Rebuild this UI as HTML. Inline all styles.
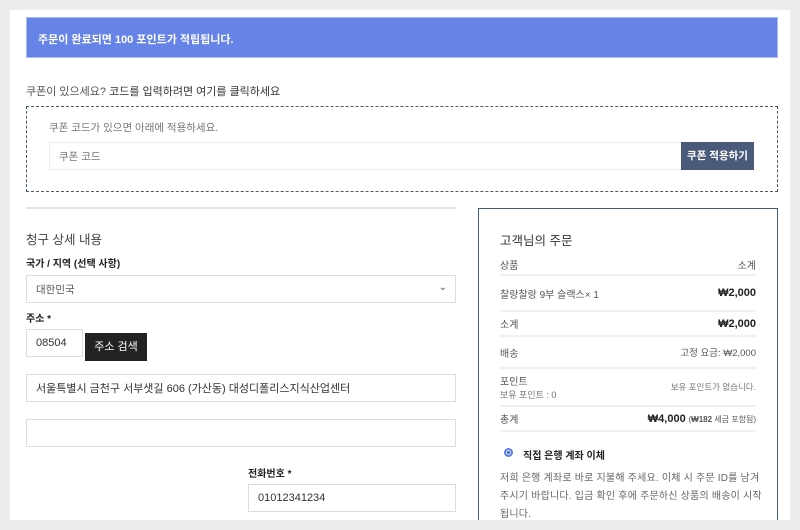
<!DOCTYPE html>
<html><head><meta charset="utf-8"><style>
*{box-sizing:border-box;margin:0;padding:0}
html{width:800px;height:530px;overflow:hidden}
body{width:800px;height:530px;background:#ededed;font-family:"Liberation Sans","Noto Sans CJK KR",sans-serif;position:relative;overflow:hidden;color:#333}
.p{position:absolute;left:10px;top:10px;width:780px;height:510px;background:#fff}
.a{position:absolute}
.in{position:absolute;border:1px solid #ddd;background:#fff;font-size:12px;color:#333;padding-left:9px;display:flex;align-items:center}
.row{position:absolute;left:500px;width:256px;font-size:10px;display:flex;justify-content:space-between;align-items:center;border-bottom:2px solid #f0f0f0}
</style></head><body>
<div class="p"></div>
<div class="a" style="left:26px;top:17px;width:752px;height:41px;background:#6683e8;border:1px solid #a9b9f2;color:#fff;font-size:11px;font-weight:bold;padding:13px 0 0 11px">주문이 완료되면 100 포인트가 적립됩니다.</div>
<div class="a" style="left:26px;top:83px;font-size:11px;color:#555">쿠폰이 있으세요? <span style="color:#333">코드를 입력하려면 여기를 클릭하세요</span></div>
<div class="a" style="left:26px;top:106px;width:752px;height:86px;border:1px dashed #4a5a7a"></div>
<div class="a" style="left:49px;top:120px;font-size:10.5px;color:#777">쿠폰 코드가 있으면 아래에 적용하세요.</div>
<div class="in" style="left:49px;top:142px;width:633px;height:28px;color:#777;font-size:10.5px;border-color:#eee">쿠폰 코드</div>
<div class="a" style="left:681px;top:142px;width:73px;height:28px;background:#4a5a7a;color:#fff;font-size:10.5px;font-weight:bold;text-align:center;line-height:28px">쿠폰 적용하기</div>
<div class="a" style="left:26px;top:207px;width:430px;height:2px;background:#e4e4e4"></div>
<div class="a" style="left:26px;top:229px;font-size:12.5px;color:#444">청구 상세 내용</div>
<div class="a" style="left:26px;top:255px;font-size:10px;font-weight:bold;color:#222">국가 / 지역 (선택 사항)</div>
<div class="in" style="left:26px;top:275px;width:430px;height:28px;color:#555;font-size:10.5px">대한민국<span style="position:absolute;right:8px;top:6px;font-size:10px">⌄</span></div>
<div class="a" style="left:26px;top:310px;font-size:10px;font-weight:bold;color:#222">주소 *</div>
<div class="in" style="left:26px;top:329px;width:57px;height:28px;font-size:11px">08504</div>
<div class="a" style="left:85px;top:333px;width:62px;height:28px;background:#222;color:#fff;font-size:11px;text-align:center;line-height:28px">주소 검색</div>
<div class="in" style="left:26px;top:374px;width:430px;height:28px;font-size:11px">서울특별시 금천구 서부샛길 606 (가산동) 대성디폴리스지식산업센터</div>
<div class="in" style="left:26px;top:419px;width:430px;height:28px"></div>
<div class="a" style="left:248px;top:465px;font-size:10px;font-weight:bold;color:#222">전화번호 *</div>
<div class="in" style="left:248px;top:484px;width:208px;height:28px;font-size:11px">01012341234</div>
<div class="a" style="left:478px;top:208px;width:300px;height:330px;border:1px solid #4a5a7a"></div>
<div class="a" style="left:500px;top:230px;font-size:12.5px;color:#333">고객님의 주문</div>
<div class="row" style="top:254px;height:22px;color:#555">상품<span>소계</span></div>
<div class="row" style="top:276px;height:36px;color:#555">찰랑찰랑 9부 슬랙스× 1<b style="color:#222;font-size:11px">₩2,000</b></div>
<div class="row" style="top:312px;height:25px;color:#555">소계<b style="color:#222;font-size:11px">₩2,000</b></div>
<div class="row" style="top:337px;height:32px;color:#555">배송<span style="font-size:9.5px">고정 요금: ₩2,000</span></div>
<div class="row" style="top:369px;height:38px;color:#555"><span>포인트<br><span style="font-size:9px;color:#777">보유 포인트 : 0</span></span><span style="font-size:8.5px;color:#777">보유 포인트가 없습니다.</span></div>
<div class="row" style="top:407px;height:25px;color:#555">총계<span><b style="color:#222;font-size:11px">₩4,000</b> <span style="font-size:8px">(<b>₩182</b> 세금 포함됨)</span></span></div>
<div class="a" style="left:504px;top:448px;width:9px;height:9px;border-radius:50%;border:2px solid #5b7de8;background:#2f5ee0;box-shadow:inset 0 0 0 1px #fff"></div>
<div class="a" style="left:523px;top:447px;font-size:10px;font-weight:bold;color:#222">직접 은행 계좌 이체</div>
<div class="a" style="left:500px;top:470px;width:262px;font-size:10px;line-height:18px;color:#666;letter-spacing:0.2px">저희 은행 계좌로 바로 지불해 주세요. 이체 시 주문 ID를 남겨 주시기 바랍니다. 입금 확인 후에 주문하신 상품의 배송이 시작됩니다.</div>
<div class="a" style="left:0;top:520px;width:800px;height:10px;background:#ededed"></div>
</body></html>
